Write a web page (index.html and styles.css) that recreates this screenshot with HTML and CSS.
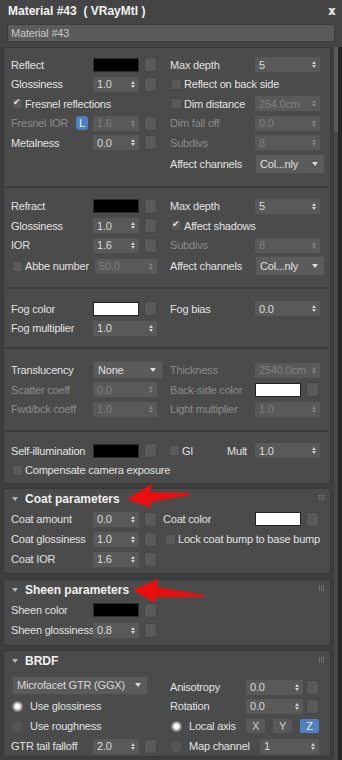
FILE: index.html
```html
<!DOCTYPE html>
<html lang="en">
<head>
    <meta charset="UTF-8">
    <meta name="viewport" content="width=device-width, initial-scale=1.0">
    <title>Material #43</title>
    <link rel="stylesheet" href="styles.css">
</head>
<body>
<div class="win">
    <div class="titlebar">
        <span>Material #43&nbsp;&nbsp;( VRayMtl )</span>
        <span class="close">x</span>
    </div>
    <div class="namebar"><div class="namefield">Material #43</div></div>

    <div class="main">
        <div class="panels">
            <!-- basic parameters -->
            <div class="panel">
                <div class="grp g1">
                    <div class="row">
                        <div class="lh"><span class="lab">Reflect</span><i class="sw blk"></i><i class="sq"></i></div>
                        <div class="rh"><span class="rlab">Max depth</span><div class="spin w65"><span>5</span><i class="arr"></i></div></div>
                    </div>
                    <div class="row">
                        <div class="lh"><span class="lab">Glossiness</span><div class="spin"><span>1.0</span><i class="arr"></i></div><i class="sq"></i></div>
                        <div class="rh"><span class="ck"><i class="box"></i>Reflect on back side</span></div>
                    </div>
                    <div class="row">
                        <div class="lh"><span class="ck"><i class="box on"></i>Fresnel reflections</span></div>
                        <div class="rh"><span class="rlab"><span class="ck"><i class="box"></i>Dim distance</span></span><div class="spin w65 off"><span>254.0cm</span><i class="arr"></i></div></div>
                    </div>
                    <div class="row">
                        <div class="lh"><span class="lab off">Fresnel IOR<b class="lbtn">L</b></span><div class="spin off"><span>1.6</span><i class="arr"></i></div><i class="sq"></i></div>
                        <div class="rh"><span class="rlab off">Dim fall off</span><div class="spin w65 off"><span>0.0</span><i class="arr"></i></div></div>
                    </div>
                    <div class="row">
                        <div class="lh"><span class="lab">Metalness</span><div class="spin"><span>0.0</span><i class="arr"></i></div><i class="sq"></i></div>
                        <div class="rh"><span class="rlab off">Subdivs</span><div class="spin w65 off"><span>8</span><i class="arr"></i></div></div>
                    </div>
                    <div class="row tall">
                        <div class="lh"></div>
                        <div class="rh"><span class="rlab">Affect channels</span><div class="drop"><span>Col...nly</span><i class="dn"></i></div></div>
                    </div>
                </div>

                <div class="grp g2">
                    <div class="row">
                        <div class="lh"><span class="lab">Refract</span><i class="sw blk"></i><i class="sq"></i></div>
                        <div class="rh"><span class="rlab">Max depth</span><div class="spin w65"><span>5</span><i class="arr"></i></div></div>
                    </div>
                    <div class="row">
                        <div class="lh"><span class="lab">Glossiness</span><div class="spin"><span>1.0</span><i class="arr"></i></div><i class="sq"></i></div>
                        <div class="rh"><span class="ck"><i class="box on"></i>Affect shadows</span></div>
                    </div>
                    <div class="row">
                        <div class="lh"><span class="lab">IOR</span><div class="spin"><span>1.6</span><i class="arr"></i></div><i class="sq"></i></div>
                        <div class="rh"><span class="rlab off">Subdivs</span><div class="spin w65 off"><span>8</span><i class="arr"></i></div></div>
                    </div>
                    <div class="row tall">
                        <div class="lh"><span class="lab abbe"><span class="ck"><i class="box"></i>Abbe number</span></span><div class="spin w62 off"><span>50.0</span><i class="arr"></i></div></div>
                        <div class="rh"><span class="rlab">Affect channels</span><div class="drop"><span>Col...nly</span><i class="dn"></i></div></div>
                    </div>
                </div>

                <div class="grp g3">
                    <div class="row">
                        <div class="lh"><span class="lab">Fog color</span><i class="sw wht"></i><i class="sq"></i></div>
                        <div class="rh"><span class="rlab">Fog bias</span><div class="spin w65"><span>0.0</span><i class="arr"></i></div></div>
                    </div>
                    <div class="row">
                        <div class="lh"><span class="lab">Fog multiplier</span><div class="spin w64"><span>1.0</span><i class="arr"></i></div></div>
                    </div>
                </div>

                <div class="grp g4">
                    <div class="row r20">
                        <div class="lh"><span class="lab">Translucency</span><div class="drop small"><span>None</span><i class="dn"></i></div></div>
                        <div class="rh"><span class="rlab off">Thickness</span><div class="spin w65 off"><span>2540.0cm</span><i class="arr"></i></div></div>
                    </div>
                    <div class="row">
                        <div class="lh"><span class="lab off">Scatter coeff</span><div class="spin w64 off"><span>0.0</span><i class="arr"></i></div></div>
                        <div class="rh"><span class="rlab off">Back-side color</span><i class="sw wht"></i><i class="sq"></i></div>
                    </div>
                    <div class="row">
                        <div class="lh"><span class="lab off">Fwd/bck coeff</span><div class="spin w64 off"><span>1.0</span><i class="arr"></i></div></div>
                        <div class="rh"><span class="rlab off">Light multiplier</span><div class="spin w65 off"><span>1.0</span><i class="arr"></i></div></div>
                    </div>
                </div>

                <div class="grp g5">
                    <div class="row">
                        <div class="lh"><span class="lab">Self-illumination</span><i class="sw blk"></i><i class="sq"></i></div>
                        <div class="rh gi"><span class="gicell"><span class="ck"><i class="box"></i>GI</span></span><span class="mult">Mult</span><div class="spin w65"><span>1.0</span><i class="arr"></i></div></div>
                    </div>
                    <div class="row">
                        <span class="ck"><i class="box"></i>Compensate camera exposure</span>
                    </div>
                </div>
            </div>

            <!-- coat -->
            <div class="panel coat">
                <div class="phead"><i class="tri"></i>Coat parameters<i class="grip"></i></div>
                <div class="row r20">
                    <div class="lh"><span class="lab">Coat amount</span><div class="spin"><span>0.0</span><i class="arr"></i></div><i class="sq"></i></div>
                    <div class="rh wide"><span class="rlab">Coat color</span><i class="sw wht"></i><i class="sq"></i></div>
                </div>
                <div class="row r20">
                    <div class="lh"><span class="lab">Coat glossiness</span><div class="spin"><span>1.0</span><i class="arr"></i></div><i class="sq"></i></div>
                    <div class="rh wide"><span class="ck lock"><i class="box"></i>Lock coat bump to base bump</span></div>
                </div>
                <div class="row r20">
                    <div class="lh"><span class="lab">Coat IOR</span><div class="spin"><span>1.6</span><i class="arr"></i></div><i class="sq"></i></div>
                </div>
            </div>

            <!-- sheen -->
            <div class="panel sheen">
                <div class="phead"><i class="tri"></i>Sheen parameters<i class="grip"></i></div>
                <div class="row r20">
                    <div class="lh"><span class="lab">Sheen color</span><i class="sw blk"></i><i class="sq"></i></div>
                </div>
                <div class="row r20">
                    <div class="lh"><span class="lab">Sheen glossiness</span><div class="spin"><span>0.8</span><i class="arr"></i></div><i class="sq"></i></div>
                </div>
            </div>

            <!-- brdf -->
            <div class="panel brdf">
                <div class="phead"><i class="tri"></i>BRDF<i class="grip"></i></div>
                <div class="row first">
                    <div class="lh"><div class="drop ggx"><span>Microfacet GTR (GGX)</span><i class="dn"></i></div></div>
                    <div class="rh"><span class="rlab b">Anisotropy</span><div class="spin w57"><span>0.0</span><i class="arr"></i></div><i class="sq s3"></i></div>
                </div>
                <div class="row r20">
                    <div class="lh"><span class="rad on"></span>Use glossiness</div>
                    <div class="rh"><span class="rlab b">Rotation</span><div class="spin w57"><span>0.0</span><i class="arr"></i></div><i class="sq s3"></i></div>
                </div>
                <div class="row r20">
                    <div class="lh"><span class="rad"></span>Use roughness</div>
                    <div class="rh"><span class="rlab b"><span class="rad on"></span>Local axis</span>
                        <span class="axis">X</span><span class="axis">Y</span><span class="axis sel">Z</span></div>
                </div>
                <div class="row r20">
                    <div class="lh"><span class="lab">GTR tail falloff</span><div class="spin"><span>2.0</span><i class="arr"></i></div><i class="sq"></i></div>
                    <div class="rh"><span class="rlab map"><span class="rad"></span>Map channel</span><div class="spin w59"><span>1</span><i class="arr"></i></div></div>
                </div>
            </div>
        </div>
        <div class="scroll"><div class="thumb"></div></div>
    </div>

    <svg class="marks" width="342" height="760" viewBox="0 0 342 760">
        <path d="M127 499 L152 484 L150 492 L190 493 L190 495 L150 502 L152 508 Z" fill="#ea0f0f"/>
        <path d="M133 590 L158 579 L157 587 L205 595 L205 597 L156 597 L155 603 Z" fill="#ea0f0f"/>
    </svg>
</div>
</body>
</html>
```

FILE: styles.css
```css
* {
    margin: 0;
    padding: 0;
    box-sizing: border-box;
}

body {
    width: 342px;
    height: 760px;
    overflow: hidden;
    background: #3e3e3e;
    font-family: "Liberation Sans", Arial, sans-serif;
    font-size: 11px;
    letter-spacing: -0.2px;
    color: #e2e2e2;
}

.win {
    position: relative;
    width: 342px;
    height: 760px;
    background: #444444;
}

.titlebar {
    height: 21px;
    display: flex;
    align-items: center;
    justify-content: space-between;
    padding: 0 7px 0 8px;
    font-size: 12px;
    font-weight: bold;
    letter-spacing: 0;
    color: #f2f2f2;
}

.close {
    font-size: 12px;
    color: #e8e8e8;
    text-shadow: 1px 0 0 #bdbdbd;
}

.namebar {
    padding: 3px 7px 0 7px;
}

.namefield {
    height: 18px;
    line-height: 16px;
    padding-left: 3px;
    background: #5a5a5a;
    border: 1px solid #3d3d3d;
    color: #c8c8c8;
}

.main {
    display: flex;
    margin-top: 5px;
    height: 718px;
    background: #3e3e3e;
    border-right: 4px solid #262626;
}

.panels {
    width: 328px;
    margin-left: 3px;
}

.scroll {
    width: 5px;
    margin-left: 2px;
    background: #474747;
    border-left: 1px solid #3a3a3a;
}

.thumb {
    height: 85px;
    background: #5b5b5b;
}

.panel {
    position: relative;
    background: #4b4b4b;
    border: 1px solid #383838;
    border-radius: 3px;
    margin-bottom: 4px;
}

.panel.coat {
    padding-bottom: 4px;
}

.panel.sheen {
    margin-top: 5px;
    padding-bottom: 5px;
}

.grp {
    margin: 0 2px 0 1px;
    border-bottom: 2px solid #3c3c3c;
}

.g1 { padding: 7px 0 11px; }
.g2 { padding: 9px 0 10px; }
.g3 { padding: 10px 0 9px; }
.g4 { padding: 11px 0 11px; }
.g5 { padding: 9px 0 3px; border-bottom: none; }

.row {
    display: flex;
    align-items: center;
    height: 19.5px;
    padding-left: 6px;
}

.row.tall { height: 22px; }
.row.r20 { height: 20px; }

.panel > .row {
    padding-left: 7px;
}

.lh {
    width: 159px;
    display: flex;
    align-items: center;
    flex-shrink: 0;
}

.rh {
    display: flex;
    align-items: center;
}

.lab {
    width: 82px;
    display: flex;
    align-items: center;
    white-space: nowrap;
    flex-shrink: 0;
}

.lab.abbe { width: 84px; }

.rlab {
    width: 85px;
    display: flex;
    align-items: center;
    white-space: nowrap;
    flex-shrink: 0;
}

.off { color: #8b8b8b; }

.lbtn {
    margin-left: auto;
    margin-right: 5px;
    width: 12px;
    height: 14px;
    border-radius: 3px;
    background: #4f81c2;
    color: #f2f6ff;
    font-weight: normal;
    font-size: 11px;
    text-align: center;
    line-height: 14px;
}

/* colour swatches and map buttons */
.sw {
    width: 46px;
    height: 14px;
    border: 1px solid #2b2b2b;
    flex-shrink: 0;
}

.sw.blk { background: #000; }
.sw.wht { background: #fff; border-color: #222; }

.sq {
    width: 13px;
    height: 15px;
    margin-left: 5px;
    background: #5a5a5a;
    border: 1px solid #454545;
    border-radius: 3px;
    flex-shrink: 0;
}

.sq.s3 { margin-left: 3px; }

/* spinners */
.spin {
    width: 46px;
    height: 15px;
    display: flex;
    align-items: center;
    justify-content: space-between;
    padding: 0 4px 0 4px;
    background: #595959;
    color: #dcdcdc;
    flex-shrink: 0;
}

.spin.off { color: #808080; }
.w57 { width: 57px; }
.w59 { width: 59px; }
.w62 { width: 62px; }
.w64 { width: 64px; }
.w65 { width: 65px; }

.arr {
    display: flex;
    flex-direction: column;
    gap: 1px;
}

.arr::before,
.arr::after {
    content: "";
    border-left: 2.5px solid transparent;
    border-right: 2.5px solid transparent;
}

.arr::before { border-bottom: 3px solid #cfcfcf; }
.arr::after { border-top: 3px solid #cfcfcf; }
.off .arr::before { border-bottom-color: #858585; }
.off .arr::after { border-top-color: #858585; }

/* dropdowns */
.drop {
    width: 70px;
    height: 20px;
    display: flex;
    align-items: center;
    justify-content: space-between;
    padding: 0 6px 0 4px;
    background: #5b5b5b;
    border: 1px solid #4f4f4f;
    color: #e0e0e0;
}

.drop.small {
    height: 18px;
    padding-left: 4px;
}

.drop.ggx {
    width: 136px;
    height: 19px;
    margin-left: 1px;
    padding-left: 4px;
    color: #d8d8d8;
}

.dn {
    border-left: 3.5px solid transparent;
    border-right: 3.5px solid transparent;
    border-top: 4px solid #dcdcdc;
}

/* checkboxes and radios */
.ck {
    display: flex;
    align-items: center;
    white-space: nowrap;
}

.box {
    width: 11px;
    height: 11px;
    margin: 0 2px 0 1px;
    background: #5a5a5a;
    border: 1px solid #474747;
    position: relative;
    flex-shrink: 0;
}

.box.on::after {
    content: "\2714";
    position: absolute;
    left: 0;
    top: -2px;
    font-family: "DejaVu Sans", sans-serif;
    font-size: 9px;
    color: #e6e6e6;
}

.rad {
    width: 11px;
    height: 11px;
    margin: 0 7px 0 1px;
    border-radius: 50%;
    background: #565656;
    flex-shrink: 0;
}

.rad.on {
    background: radial-gradient(circle, #ffffff 0 2px, #d0d0d0 3px, #7a7a7a 5px);
}

.rlab.b { width: 76px; }
.rlab.map { width: 90px; }

.axis {
    width: 19px;
    height: 14px;
    margin-right: 8px;
    border-radius: 2px;
    background: #595959;
    color: #d0d0d0;
    text-align: center;
    line-height: 14px;
}

.axis.sel {
    background: #4f81c2;
    color: #eef3ff;
}

.gi {
    margin-left: -2px;
}

.gicell { width: 59px; }
.mult { width: 28px; }

.rh.wide { margin-left: -7px; }
.rh.wide .rlab { width: 92px; }
.lock .box { margin-left: 2px; }

/* rollout headers */
.phead {
    height: 20px;
    display: flex;
    align-items: center;
    padding-left: 8px;
    font-size: 12px;
    font-weight: bold;
    letter-spacing: 0;
    color: #f0f0f0;
}

.tri {
    border-left: 3px solid transparent;
    border-right: 3px solid transparent;
    border-top: 4px solid #b8b8b8;
    margin-right: 7px;
}

.grip {
    position: absolute;
    right: 10px;
    top: 6px;
    width: 1px;
    height: 1px;
    background: #8a8a8a;
    box-shadow: 2px 0 #8a8a8a, 4px 0 #8a8a8a,
                0 2px #8a8a8a, 2px 2px #8a8a8a, 4px 2px #8a8a8a,
                0 4px #8a8a8a, 2px 4px #8a8a8a, 4px 4px #8a8a8a;
}

.brdf .row.first {
    height: 25px;
    align-items: flex-end;
    padding-bottom: 1.5px;
}

.brdf .row.first .lh,
.brdf .row.first .rh {
    align-items: flex-end;
}

.brdf .row.first .rlab {
    height: 15px;
}

.marks {
    position: absolute;
    left: 0;
    top: 0;
    pointer-events: none;
}
```
